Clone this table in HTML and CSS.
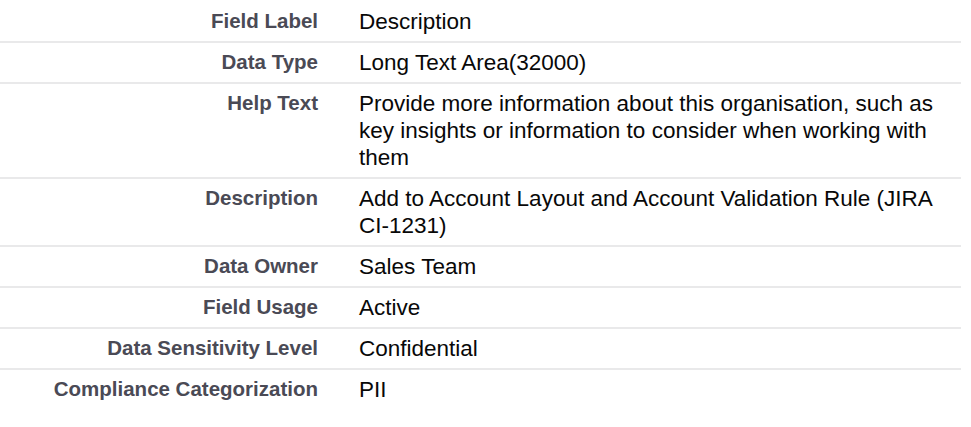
FILE: index.html
```html
<!DOCTYPE html>
<html lang="en">
<head>
<meta charset="utf-8">
<title>Field Details</title>
<link rel="stylesheet" href="styles.css">
</head>
<body>
<div class="details">
  <div class="row"><div class="label">Field Label</div><div class="value">Description</div></div>
  <div class="row"><div class="label">Data Type</div><div class="value">Long Text Area(32000)</div></div>
  <div class="row"><div class="label">Help Text</div><div class="value">Provide more information about this organisation, such as key insights or information to consider when working with them</div></div>
  <div class="row"><div class="label">Description</div><div class="value">Add to Account Layout and Account Validation Rule (JIRA CI-1231)</div></div>
  <div class="row"><div class="label">Data Owner</div><div class="value">Sales Team</div></div>
  <div class="row"><div class="label">Field Usage</div><div class="value">Active</div></div>
  <div class="row"><div class="label">Data Sensitivity Level</div><div class="value">Confidential</div></div>
  <div class="row last"><div class="label">Compliance Categorization</div><div class="value">PII</div></div>
</div>
</body>
</html>
```

FILE: styles.css
```css
html, body {
  margin: 0;
  padding: 0;
  background: #ffffff;
}

.details {
  width: 961px;
  padding-top: 2px;
  font-family: "Liberation Sans", Arial, sans-serif;
}

.row {
  display: grid;
  grid-template-columns: 318px 1fr;
  column-gap: 41px;
  padding: 6px 0;
  border-bottom: 2px solid #e9e9ea;
}

.row.last {
  border-bottom: none;
}

.label {
  text-align: right;
  font-weight: bold;
  font-size: 20.5px;
  line-height: 25px;
  color: #4a4a55;
}

.value {
  padding-right: 16px;
  font-size: 22.5px;
  line-height: 27px;
  color: #080808;
}
```
